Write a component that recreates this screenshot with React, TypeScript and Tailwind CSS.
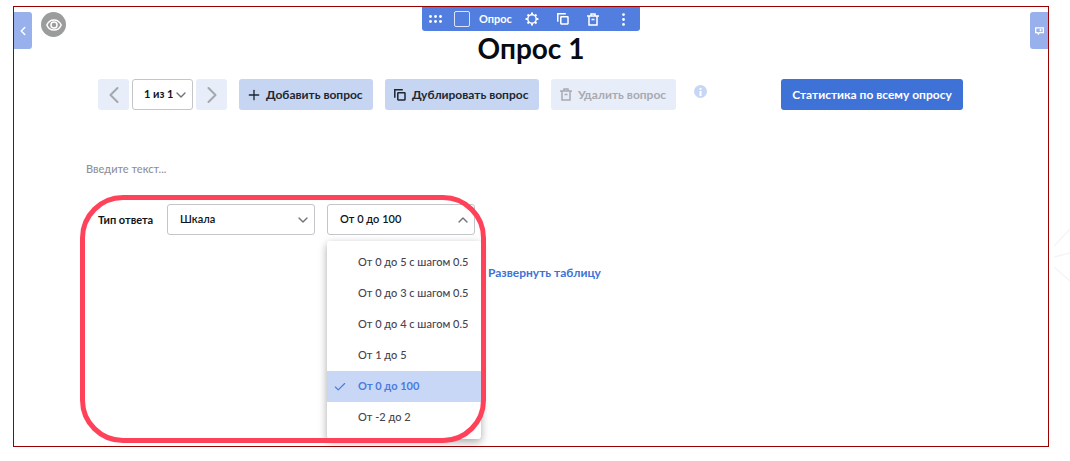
import { useState } from "react";
import type { ReactNode } from "react";
import { Check, ChevronDown, ChevronLeft, ChevronRight, ChevronUp, Plus } from "lucide-react";
import clsx from "clsx";

const SCALES = [
  "От 0 до 5 с шагом 0.5",
  "От 0 до 3 с шагом 0.5",
  "От 0 до 4 с шагом 0.5",
  "От 1 до 5",
  "От 0 до 100",
  "От -2 до 2",
];

function CopyIcon() {
  return (
    <svg viewBox="0 0 12 12" className="size-3 shrink-0" fill="none" stroke="currentColor" strokeWidth="1.5">
      <path d="M.8 8.8V.8h8" />
      <rect x="3.8" y="3.8" width="7.2" height="7.2" rx=".4" />
    </svg>
  );
}

function TrashIcon() {
  return (
    <svg viewBox="0 0 12 13" className="h-[13px] w-3 shrink-0" fill="none" stroke="currentColor" strokeWidth="1.5">
      <path d="M0 3h12M4 2.8V1h4v1.8M2 3.2V12h8V3.2M4.5 6.5h3" />
    </svg>
  );
}

function GearIcon() {
  return (
    <svg viewBox="0 0 14 14" className="size-3.5 shrink-0" fill="none" stroke="currentColor">
      <circle cx="7" cy="7" r="4.2" strokeWidth="1.5" />
      <path
        d="M7 .6v2M7 11.4v2M.6 7h2M11.4 7h2M2.5 2.5l1.400 1.400M10.100 10.100l1.400 1.400M2.500 11.500l1.400-1.400M10.100 3.900l1.400-1.400"
        strokeWidth="2"
      />
    </svg>
  );
}

function GripIcon() {
  return (
    <svg viewBox="0 0 13 8" className="h-2 w-[13px] shrink-0" fill="currentColor">
      {[1.5, 6.5, 11.5].map((x) => (
        <g key={x}>
          <circle cx={x} cy="1.5" r="1.4" />
          <circle cx={x} cy="6.5" r="1.4" />
        </g>
      ))}
    </svg>
  );
}

function DotsIcon() {
  return (
    <svg viewBox="0 0 3 13" className="h-[13px] w-[3px] shrink-0" fill="currentColor">
      <circle cx="1.5" cy="1.6" r="1.4" />
      <circle cx="1.5" cy="6.5" r="1.4" />
      <circle cx="1.5" cy="11.4" r="1.4" />
    </svg>
  );
}

function EyeIcon() {
  return (
    <svg viewBox="0 0 16 12" className="h-3 w-4" fill="none" stroke="currentColor" strokeWidth="1.5">
      <path d="M.8 6C2.2 2.7 4.8.9 8 .9S13.8 2.7 15.2 6C13.8 9.3 11.2 11.1 8 11.1S2.2 9.3.8 6Z" />
      <circle cx="8" cy="6" r="3" />
    </svg>
  );
}

function ChatIcon() {
  return (
    <svg viewBox="0 0 9 8" className="h-2 w-[9px]" fill="none" stroke="currentColor" strokeWidth="1.3">
      <path d="M.7.8h7.6v4.800H4.500L3.300 7 2.800 5.600H.7Z" />
      <path d="M5.500 2v2.400M6.800 3.200H4.300" strokeWidth=".9" />
    </svg>
  );
}

type SelectBoxProps = {
  id: string;
  label?: string;
  className: string;
  value: string;
  options: string[];
  icon: ReactNode;
  onChange?: (value: string) => void;
  onOpen?: () => void;
};

function SelectBox({ id, label, className, value, options, icon, onChange, onOpen }: SelectBoxProps) {
  return (
    <div className="grid shrink-0 items-center text-[11px]">
      <select
        id={id}
        aria-label={label}
        value={value}
        onChange={(e) => onChange?.(e.target.value)}
        onMouseDown={(e) => {
          if (!onOpen) return;
          e.preventDefault();
          onOpen();
        }}
        className={clsx(
          "col-start-1 row-start-1 h-[31px] appearance-none rounded-[3px] border border-[#c4c5c9] bg-white text-[#0d1520]",
          className,
        )}
      >
        {options.map((option) => (
          <option key={option}>{option}</option>
        ))}
      </select>
      <span className="pointer-events-none col-start-1 row-start-1 justify-self-end pr-1 text-[#6f7078]">
        {icon}
      </span>
    </div>
  );
}

const tool = "flex h-[31px] shrink-0 items-center rounded-[3px] font-bold";

export default function App() {
  const [scale, setScale] = useState("От 0 до 100");
  const [open, setOpen] = useState(true);

  return (
    <div className="relative bg-white pt-1.5 pr-[21px] pb-3.5 pl-[13px] font-['Lato','Inter',sans-serif] text-[12px]">
      <main className="border border-[#990000] pb-[3px]">
        <header className="grid h-[72px] grid-cols-[1fr_auto_1fr] items-start">
          <div className="flex items-center gap-[9px] pt-[5px]">
            <button
              aria-label="Открыть панель"
              className="flex h-[37px] w-[18px] items-center justify-center rounded-r-[3px] bg-[#98b1ed] text-white"
            >
              <ChevronLeft className="size-3.5" strokeWidth={2.5} />
            </button>
            <button
              aria-label="Просмотр"
              className="mb-3 flex size-[25px] items-center justify-center rounded-full bg-[#9b9d9c] text-white"
            >
              <EyeIcon />
            </button>
          </div>

          <div className="flex flex-col items-center">
            <div className="flex h-6 items-center rounded-b-[3px] bg-[#527ee0] px-[7px] text-white">
              <button aria-label="Переместить">
                <GripIcon />
              </button>
              <input
                type="checkbox"
                aria-label="Выбрать блок"
                className="ml-3 size-4 appearance-none rounded-xs border border-white/80 checked:bg-white"
              />
              <span className="ml-[9px] w-[34px] text-[11px] font-bold">Опрос</span>
              <button aria-label="Настройки" className="ml-3">
                <GearIcon />
              </button>
              <button aria-label="Копировать" className="ml-[18px]">
                <CopyIcon />
              </button>
              <button aria-label="Удалить" className="ml-[18px]">
                <TrashIcon />
              </button>
              <button aria-label="Ещё" className="mr-2 ml-[23px]">
                <DotsIcon />
              </button>
            </div>
            <h1 className="text-[28px] leading-[34px] font-bold text-[#060b14]">Опрос 1</h1>
          </div>

          <button
            aria-label="Комментарии"
            className="mt-[5px] flex h-[37px] w-[18px] items-center justify-center justify-self-end rounded-l-[3px] bg-[#98b1ed] text-white"
          >
            <ChatIcon />
          </button>
        </header>

        <div className="flex items-start pr-[85px] pl-[84px]">
          <div className="flex gap-[3px]">
            <button
              disabled
              aria-label="Предыдущий вопрос"
              className={clsx(tool, "w-[31px] justify-center bg-[#e7edf9] text-[#a4a7ac]")}
            >
              <ChevronLeft className="size-7" strokeWidth={1.75} />
            </button>
            <SelectBox
              id="question"
              label="Вопрос"
              className="w-[61px] pl-[11px] font-bold"
              value="1 из 1"
              options={["1 из 1"]}
              icon={<ChevronDown className="size-4" />}
            />
            <button
              disabled
              aria-label="Следующий вопрос"
              className={clsx(tool, "w-[31px] justify-center bg-[#e7edf9] text-[#a4a7ac]")}
            >
              <ChevronRight className="size-7" strokeWidth={1.75} />
            </button>
          </div>

          <div className="ml-3 flex gap-3">
            <button className={clsx(tool, "w-[134px] gap-1 bg-[#c6d5f2] pl-[7px] text-[#1c2733]")}>
              <Plus className="size-4" />
              Добавить вопрос
            </button>
            <button className={clsx(tool, "w-[154px] gap-1.5 bg-[#c6d5f2] pl-[9px] text-[#1c2733]")}>
              <CopyIcon />
              Дублировать вопрос
            </button>
            <button disabled className={clsx(tool, "w-[125px] gap-1.5 bg-[#e7edf9] pl-[9px] text-[#a7aab0]")}>
              <TrashIcon />
              Удалить вопрос
            </button>
          </div>

          <button
            aria-label="Справка"
            className="mt-1.5 ml-[18px] flex size-[13px] items-center justify-center rounded-full bg-[#c6d7f5] text-white"
          >
            <svg viewBox="0 0 3 8" className="h-2 w-[3px]" fill="currentColor">
              <path d="M.5 0h2v1.8h-2ZM.5 3h2v5h-2Z" />
            </svg>
          </button>

          <button className={clsx(tool, "ml-auto w-[182px] justify-center bg-[#3e72d6] text-white")}>
            Статистика по всему опросу
          </button>
        </div>

        <div className="flex pt-[49px] pr-20 pl-[72px]">
          <input
            aria-label="Текст вопроса"
            placeholder="Введите текст..."
            className="h-[18px] w-full text-[11px] font-medium outline-none placeholder:text-[#8d909b]"
          />
        </div>

        <div className="mt-[18px] flex items-start gap-0.5 pl-[66px]">
          <section className="relative flex w-[406px] shrink-0 items-start pt-[9px] pb-1 pl-[18px]">
            <label htmlFor="answer-type" className="w-[69px] text-[11px] leading-[31px] font-bold text-[#0d1520]">
              Тип ответа
            </label>
            <SelectBox
              id="answer-type"
              className="w-[148px] pl-3 font-semibold"
              value="Шкала"
              options={["Шкала"]}
              icon={<ChevronDown className="size-4" />}
            />
            <div className="ml-3 w-[148px]">
              <SelectBox
                id="scale"
                label="Диапазон шкалы"
                className="w-[148px] pl-3 font-semibold"
                value={scale}
                options={SCALES}
                icon={open ? <ChevronUp className="size-4" /> : <ChevronDown className="size-4" />}
                onChange={setScale}
                onOpen={() => setOpen(!open)}
              />
              <ul
                role="listbox"
                aria-label="Диапазон шкалы"
                className={clsx(
                  "mt-1.5 w-[154px] rounded-[3px] bg-white py-1.5 text-[11px] shadow-[0_3px_8px_rgba(0,0,0,0.35)]",
                  !open && "invisible",
                )}
              >
                {SCALES.map((item) => (
                  <li
                    key={item}
                    role="option"
                    aria-selected={item === scale}
                    onClick={() => {
                      setScale(item);
                      setOpen(false);
                    }}
                    className={clsx(
                      "flex h-[31px] cursor-pointer items-center pl-1.5 whitespace-nowrap",
                      item === scale ? "bg-[#c8d7f5] font-bold text-[#4a7be0]" : "font-medium text-[#45444f]",
                    )}
                  >
                    <span className="w-[25px]">{item === scale && <Check className="size-3.5" />}</span>
                    {item}
                  </li>
                ))}
              </ul>
            </div>
            <div className="pointer-events-none absolute inset-0 rounded-[43px] border-5 border-[#ff4259]" />
          </section>
          <a href="#table" className="mt-[70px] leading-4 font-bold text-[#3e72d6]">
            Развернуть таблицу
          </a>
        </div>
      </main>

      <svg
        viewBox="0 0 16 56"
        className="absolute top-[228px] right-0 h-14 w-4"
        fill="none"
        stroke="#f5f5f5"
        strokeWidth="1.5"
        aria-hidden="true"
      >
        <path d="M0 18 16 1M0 29l16-4M0 39l16 14" />
      </svg>
    </div>
  );
}
